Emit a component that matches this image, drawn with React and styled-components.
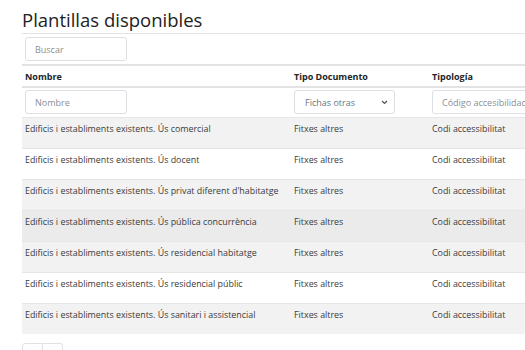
import React from 'react';
import styled, { createGlobalStyle } from 'styled-components';

const GlobalStyle = createGlobalStyle`
  html, body {
    margin: 0;
    padding: 0;
    background: #fff;
    overflow: hidden;
  }
  body {
    font-family: "Open Sans", "Noto Sans", sans-serif;
    color: #333;
  }
`;

const rows = [
  'Edificis i establiments existents. Ús comercial',
  'Edificis i establiments existents. Ús docent',
  "Edificis i establiments existents. Ús privat diferent d'habitatge",
  'Edificis i establiments existents. Ús pública concurrència',
  'Edificis i establiments existents. Ús residencial habitatge',
  'Edificis i establiments existents. Ús residencial públic',
  'Edificis i establiments existents. Ús sanitari i assistencial',
];

const App = () => {
  return (
    <Page>
      <GlobalStyle />
      <Title>Plantillas disponibles</Title>
      <Table>
        <colgroup>
          <col style={{ width: 269 }} />
          <col style={{ width: 138 }} />
          <col style={{ width: 160 }} />
        </colgroup>
        <thead>
          <SearchRow>
            <SearchCell colSpan={3}>
              <TextInput placeholder="Buscar" />
            </SearchCell>
          </SearchRow>
          <HeadRow>
            <HeadCell>Nombre</HeadCell>
            <HeadCell>Tipo Documento</HeadCell>
            <HeadCell>Tipología</HeadCell>
          </HeadRow>
          <tr>
            <FilterCell>
              <TextInput placeholder="Nombre" />
            </FilterCell>
            <FilterCell>
              <Select>
                <span>Fichas otras</span>
                <svg width="7" height="5" viewBox="0 0 7 5">
                  <path d="M1 1l2.5 2.5L6 1" fill="none" stroke="#555" strokeWidth="1.2" />
                </svg>
              </Select>
            </FilterCell>
            <FilterCell>
              <TextInput placeholder="Código accesibilidad" $wide />
            </FilterCell>
          </tr>
        </thead>
        <tbody>
          {rows.map((name, i) => (
            <BodyRow key={name} $striped={i % 2 === 0} $hover={i === 3}>
              <Cell>{name}</Cell>
              <Cell>Fitxes altres</Cell>
              <Cell>Codi accessibilitat</Cell>
            </BodyRow>
          ))}
        </tbody>
      </Table>
      <Pager>
        <PageBox />
        <PageBox />
      </Pager>
    </Page>
  );
};

export default App;

const Page = styled.div`
  width: 600px;
  padding: 0 0 0 22px;
`;

const Title = styled.h2`
  margin: 0;
  padding-top: 7px;
  height: 26px;
  font-size: 18.5px;
  font-weight: 400;
  line-height: 26px;
  color: #222;
`;

const Table = styled.table`
  width: 567px;
  border-collapse: collapse;
  table-layout: fixed;
  font-size: 8.9px;
`;

const SearchRow = styled.tr`
  border-top: 1px solid #e3e3e3;
  border-bottom: 2px solid #e3e3e3;
`;

const SearchCell = styled.td`
  padding: 3px;
  height: 24px;
`;

const HeadRow = styled.tr`
  border-bottom: 2px solid #e3e3e3;
`;

const HeadCell = styled.th`
  text-align: left;
  font-weight: 700;
  font-size: 9px;
  color: #212529;
  padding: 0 3px;
  height: 20px;
`;

const FilterCell = styled.td`
  padding: 2px 3px 3px 3px;
  height: 24px;
`;

const TextInput = styled.input`
  box-sizing: border-box;
  width: ${p => (p.$wide ? '130px' : '102px')};
  height: 24px;
  border: 1px solid #dcdfe3;
  border-radius: 3px;
  padding: 0 9px;
  font-family: "Open Sans", "Noto Sans", sans-serif;
  font-size: 9px;
  color: #555;
  display: block;
  &::placeholder {
    color: #8a8f94;
  }
`;

const Select = styled.div`
  box-sizing: border-box;
  width: 101px;
  height: 24px;
  border: 1px solid #dcdfe3;
  border-radius: 3px;
  padding: 0 6px 0 10px;
  display: flex;
  align-items: center;
  justify-content: space-between;
  color: #6c757d;
  font-size: 9px;
`;

const BodyRow = styled.tr`
  background: ${p => (p.$hover ? '#ebebeb' : p.$striped ? '#f2f2f2' : '#fff')};
  border-top: 1px solid #e6e6e6;
`;

const Cell = styled.td`
  padding: 5px 3px 0 3px;
  height: 25px;
  vertical-align: top;
  white-space: nowrap;
  overflow: hidden;
  color: #3a3a3a;
  line-height: 12px;
`;

const Pager = styled.div`
  display: flex;
  margin-top: 9px;
`;

const PageBox = styled.div`
  width: 19px;
  height: 20px;
  border: 1px solid #dee2e6;
  & + & {
    border-left: none;
  }
  &:first-child {
    border-radius: 3px 0 0 3px;
  }
  &:last-child {
    border-radius: 0 3px 3px 0;
  }
`;
